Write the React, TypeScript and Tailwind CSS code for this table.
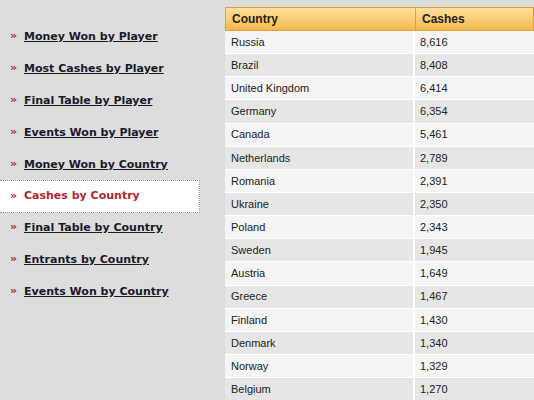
import React from 'react';

const menu = [
  'Money Won by Player',
  'Most Cashes by Player',
  'Final Table by Player',
  'Events Won by Player',
  'Money Won by Country',
  'Cashes by Country',
  'Final Table by Country',
  'Entrants by Country',
  'Events Won by Country',
];

const rows: [string, string][] = [
  ['Russia', '8,616'],
  ['Brazil', '8,408'],
  ['United Kingdom', '6,414'],
  ['Germany', '6,354'],
  ['Canada', '5,461'],
  ['Netherlands', '2,789'],
  ['Romania', '2,391'],
  ['Ukraine', '2,350'],
  ['Poland', '2,343'],
  ['Sweden', '1,945'],
  ['Austria', '1,649'],
  ['Greece', '1,467'],
  ['Finland', '1,430'],
  ['Denmark', '1,340'],
  ['Norway', '1,329'],
  ['Belgium', '1,270'],
];

const App: React.FC = () => {
  const active = 'Cashes by Country';

  return (
    <div className="flex h-[400px] w-[534px] overflow-hidden bg-[#dddddd]">
      {/* Side menu */}
      <nav className="w-[200px] shrink-0 pt-[21px] font-['DejaVu_Sans',sans-serif] text-[11px] font-bold">
        {menu.map((label) => {
          const on = label === active;
          return (
            <div
              key={label}
              className={
                on
                  ? 'flex h-[33px] items-center border border-dotted border-l-0 border-[#8a8a8a] bg-white pl-[10px] -my-px'
                  : 'flex h-[32px] items-center pl-[10px]'
                }
            >
              <span className="mb-[3px] w-[14px] text-[11px] leading-none text-[#b22222]">»</span>
              <span className={on ? 'text-[#b0282a]' : 'text-[#1a1a2a] underline'}>{label}</span>
            </div>
          );
        })}
      </nav>

      {/* Table */}
      <div className="ml-[25px] flex-1 pt-[7px] font-['Liberation_Sans',sans-serif] text-[11px] text-[#222]">
        <div className="flex h-[24px] border border-[#e0a23c] bg-gradient-to-b from-[#fde0a0] to-[#f6b848] text-[12px] font-bold text-[#2a2010]">
          <div className="flex w-[190px] items-center border-r border-[#e0a23c] pl-[6px]">Country</div>
          <div className="flex flex-1 items-center pl-[6px]">Cashes</div>
        </div>
        {rows.map(([country, cashes], i) => (
          <div
            key={country}
            className={`flex h-[23.15px] border-b border-white ${i % 2 === 0 ? 'bg-[#f4f4f4]' : 'bg-[#e6e6e6]'}`}
          >
            <div className="flex w-[190px] items-center border-r-2 border-white pl-[6px]">{country}</div>
            <div className="flex flex-1 items-center pl-[5px]">{cashes}</div>
          </div>
        ))}
      </div>
    </div>
  );
};

export default App;
